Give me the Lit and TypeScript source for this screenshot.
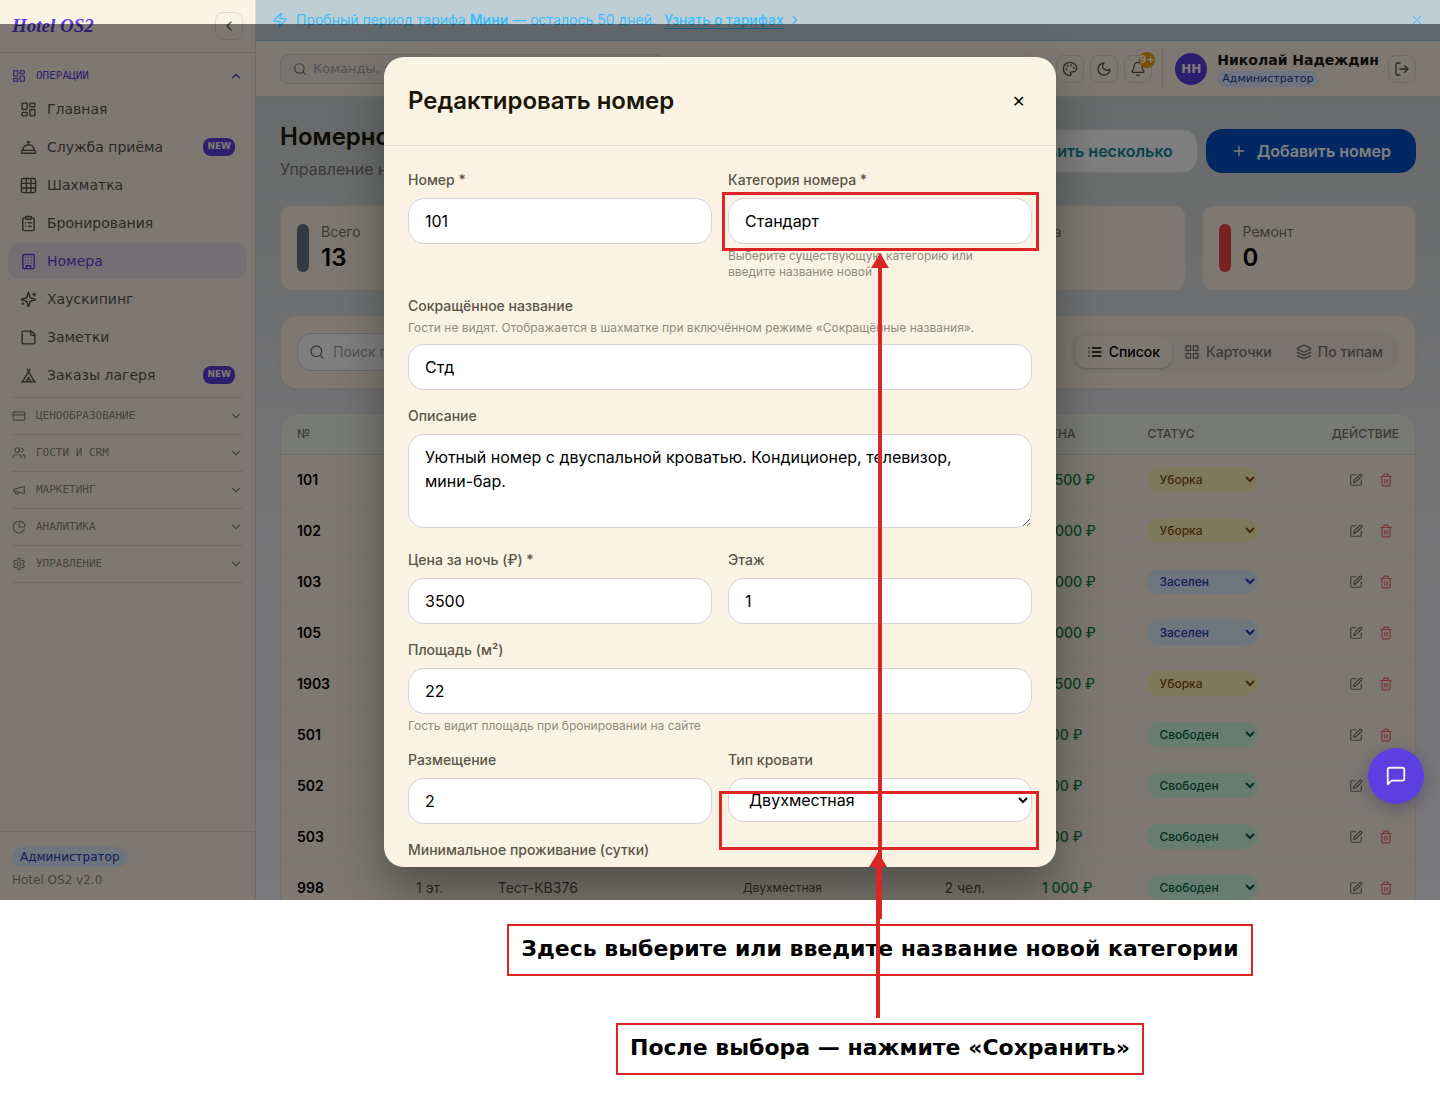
import { LitElement, html, css, svg, nothing } from "lit";
import { customElement, property } from "lit/decorators.js";
import { classMap } from "lit/directives/class-map.js";

const ICONS: Record<string, unknown> = {
  dashboard: svg`<rect x="3" y="3" width="7" height="9" rx="1"/><rect x="14" y="3" width="7" height="5" rx="1"/><rect x="14" y="12" width="7" height="9" rx="1"/><rect x="3" y="16" width="7" height="5" rx="1"/>`,
  bellhop: svg`<path d="M3 20a1 1 0 0 1-1-1v-1a2 2 0 0 1 2-2h16a2 2 0 0 1 2 2v1a1 1 0 0 1-1 1Z"/><path d="M20 16a8 8 0 1 0-16 0"/><path d="M12 4v4"/><path d="M10 4h4"/>`,
  grid: svg`<rect x="2" y="2" width="20" height="20" rx="2.5"/><path d="M2 9h20M2 15.5h20M9 2v20M15.5 2v20"/>`,
  clipboard: svg`<rect x="8" y="2" width="8" height="4" rx="1"/><path d="M16 4h2a2 2 0 0 1 2 2v14a2 2 0 0 1-2 2H6a2 2 0 0 1-2-2V6a2 2 0 0 1 2-2h2"/><path d="M12 11h4M12 16h4M8 11h.01M8 16h.01"/>`,
  building: svg`<rect x="4" y="2" width="16" height="20" rx="2"/><path d="M9 22v-4h6v4M8 6h.01M16 6h.01M12 6h.01M12 10h.01M12 14h.01M16 10h.01M16 14h.01M8 10h.01M8 14h.01"/>`,
  sparkles: svg`<path d="M9.94 15.5A2 2 0 0 0 8.5 14.06l-6.14-1.58a.5.5 0 0 1 0-.96L8.5 9.94A2 2 0 0 0 9.94 8.5l1.58-6.14a.5.5 0 0 1 .96 0L14.06 8.5a2 2 0 0 0 1.44 1.44l6.14 1.58a.5.5 0 0 1 0 .96l-6.14 1.58a2 2 0 0 0-1.44 1.44l-1.58 6.14a.5.5 0 0 1-.96 0z"/><path d="M20 3v4M22 5h-4M4 17v2M5 18H3"/>`,
  note: svg`<path d="M16 3H5a2 2 0 0 0-2 2v14a2 2 0 0 0 2 2h14a2 2 0 0 0 2-2V8Z"/><path d="M15 3v4a2 2 0 0 0 2 2h4"/>`,
  tent: svg`<path d="M3.5 21 14 3M20.5 21 10 3M15.5 21 12 15l-3.5 6M2 21h20"/>`,
  card: svg`<rect x="2" y="5" width="20" height="14" rx="2"/><path d="M2 10h20"/>`,
  users: svg`<path d="M16 21v-2a4 4 0 0 0-4-4H6a4 4 0 0 0-4 4v2"/><circle cx="9" cy="7" r="4"/><path d="M22 21v-2a4 4 0 0 0-3-3.87M16 3.13a4 4 0 0 1 0 7.75"/>`,
  megaphone: svg`<path d="m3 11 18-5v12L3 14v-3z"/><path d="M11.6 16.8a3 3 0 1 1-5.8-1.6"/>`,
  pie: svg`<path d="M21 12c.55 0 1-.45.95-1a10 10 0 0 0-8.95-8.95c-.55-.05-1 .4-1 .95v8a1 1 0 0 0 1 1z"/><path d="M21.21 15.89A10 10 0 1 1 8 2.83"/>`,
  settings: svg`<path d="M12.22 2h-.44a2 2 0 0 0-2 2v.18a2 2 0 0 1-1 1.73l-.43.25a2 2 0 0 1-2 0l-.15-.08a2 2 0 0 0-2.73.73l-.22.38a2 2 0 0 0 .73 2.73l.15.1a2 2 0 0 1 1 1.72v.51a2 2 0 0 1-1 1.74l-.15.09a2 2 0 0 0-.73 2.73l.22.38a2 2 0 0 0 2.73.73l.15-.08a2 2 0 0 1 2 0l.43.25a2 2 0 0 1 1 1.73V20a2 2 0 0 0 2 2h.44a2 2 0 0 0 2-2v-.18a2 2 0 0 1 1-1.73l.43-.25a2 2 0 0 1 2 0l.15.08a2 2 0 0 0 2.73-.73l.22-.39a2 2 0 0 0-.73-2.73l-.15-.08a2 2 0 0 1-1-1.74v-.5a2 2 0 0 1 1-1.74l.15-.09a2 2 0 0 0 .73-2.73l-.22-.38a2 2 0 0 0-2.73-.73l-.15.08a2 2 0 0 1-2 0l-.43-.25a2 2 0 0 1-1-1.73V4a2 2 0 0 0-2-2z"/><circle cx="12" cy="12" r="3"/>`,
  up: svg`<path d="m18 15-6-6-6 6"/>`,
  down: svg`<path d="m6 9 6 6 6-6"/>`,
  left: svg`<path d="m15 18-6-6 6-6"/>`,
  right: svg`<path d="m9 18 6-6-6-6"/>`,
  search: svg`<circle cx="11" cy="11" r="8"/><path d="m21 21-4.3-4.3"/>`,
  palette: svg`<circle cx="13.5" cy="6.5" r=".5" fill="currentColor"/><circle cx="17.5" cy="10.5" r=".5" fill="currentColor"/><circle cx="8.5" cy="7.5" r=".5" fill="currentColor"/><circle cx="6.5" cy="12.5" r=".5" fill="currentColor"/><path d="M12 2C6.5 2 2 6.5 2 12s4.5 10 10 10c.93 0 1.65-.75 1.65-1.69 0-.44-.18-.83-.44-1.12-.29-.29-.44-.65-.44-1.13a1.64 1.64 0 0 1 1.67-1.67h2c3.05 0 5.55-2.5 5.55-5.55C21.97 6.01 17.46 2 12 2z"/>`,
  moon: svg`<path d="M12 3a6 6 0 0 0 9 9 9 9 0 1 1-9-9Z"/>`,
  bell: svg`<path d="M10.27 21a2 2 0 0 0 3.46 0"/><path d="M3.26 15.33A1 1 0 0 0 4 17h16a1 1 0 0 0 .74-1.67C19.41 13.96 18 12.5 18 8A6 6 0 0 0 6 8c0 4.5-1.41 5.96-2.74 7.33"/>`,
  logout: svg`<path d="M9 21H5a2 2 0 0 1-2-2V5a2 2 0 0 1 2-2h4M16 17l5-5-5-5M21 12H9"/>`,
  plus: svg`<path d="M5 12h14M12 5v14"/>`,
  list: svg`<path d="M8 6h13M8 12h13M8 18h13M3 6h.01M3 12h.01M3 18h.01"/>`,
  tiles: svg`<rect x="3" y="3" width="7" height="7" rx="1"/><rect x="14" y="3" width="7" height="7" rx="1"/><rect x="14" y="14" width="7" height="7" rx="1"/><rect x="3" y="14" width="7" height="7" rx="1"/>`,
  layers: svg`<path d="M12.83 2.18a2 2 0 0 0-1.66 0L2.6 6.08a1 1 0 0 0 0 1.83l8.58 3.91a2 2 0 0 0 1.66 0l8.58-3.9a1 1 0 0 0 0-1.83z"/><path d="m22 12.5-9.17 4.16a2 2 0 0 1-1.66 0L2 12.5M22 17.5l-9.17 4.16a2 2 0 0 1-1.66 0L2 17.5"/>`,
  edit: svg`<path d="M12 3H5a2 2 0 0 0-2 2v14a2 2 0 0 0 2 2h14a2 2 0 0 0 2-2v-7"/><path d="M18.38 2.62a1 1 0 0 1 3 3l-9.01 9.01a2 2 0 0 1-.85.51l-2.87.84a.5.5 0 0 1-.62-.62l.84-2.87a2 2 0 0 1 .5-.85z"/>`,
  trash: svg`<path d="M3 6h18M19 6v14a2 2 0 0 1-2 2H7a2 2 0 0 1-2-2V6M8 6V4a2 2 0 0 1 2-2h4a2 2 0 0 1 2 2v2M10 11v6M14 11v6"/>`,
  message: svg`<path d="M21 15a2 2 0 0 1-2 2H7l-4 4V5a2 2 0 0 1 2-2h14a2 2 0 0 1 2 2z"/>`,
  zap: svg`<path d="M4 14a1 1 0 0 1-.78-1.63l9.9-10.2a.5.5 0 0 1 .86.46l-1.92 6.02A1 1 0 0 0 13 10h7a1 1 0 0 1 .78 1.63l-9.9 10.2a.5.5 0 0 1-.86-.46l1.92-6.02A1 1 0 0 0 11 14z"/>`,
  close: svg`<path d="M18 6 6 18M6 6l12 12"/>`,
};

const icon = (name: string, size = 16) =>
  html`<svg class="icon" width=${size} height=${size} viewBox="0 0 24 24" fill="none" stroke="currentColor"
    stroke-width="2" stroke-linecap="round" stroke-linejoin="round" aria-hidden="true">${ICONS[name]}</svg>`;

const base = css`
  * { box-sizing: border-box; }
  :host { text-rendering: optimizeSpeed; }
  .icon { display: block; flex: none; }
  button, input, select, textarea { font: inherit; color: inherit; margin: 0; text-rendering: inherit; }
  button { background: none; border: 0; padding: 0; cursor: pointer; }
  a { color: inherit; text-decoration: none; }
  h1, h2, p, dl, dt, dd, ul { margin: 0; padding: 0; }
  ul { list-style: none; }
`;

const NAV = [
  { icon: "dashboard", label: "Главная" },
  { icon: "bellhop", label: "Служба приёма", fresh: true },
  { icon: "grid", label: "Шахматка" },
  { icon: "clipboard", label: "Бронирования" },
  { icon: "building", label: "Номера", active: true },
  { icon: "sparkles", label: "Хаускипинг" },
  { icon: "note", label: "Заметки" },
  { icon: "tent", label: "Заказы лагеря", fresh: true },
];

const SECTIONS = [
  ["card", "ЦЕНООБРАЗОВАНИЕ"],
  ["users", "ГОСТИ И CRM"],
  ["megaphone", "МАРКЕТИНГ"],
  ["pie", "АНАЛИТИКА"],
  ["settings", "УПРАВЛЕНИЕ"],
];

@customElement("side-nav")
class SideNav extends LitElement {
  static styles = [base, css`
    :host {
      display: flex; flex-direction: column; min-height: 0; background: #fbf3e4; color: #57534e;
      border-right: 1px solid #e3dbcd; font: 14px/20px "DejaVu Sans", sans-serif;
    }
    .brand {
      display: flex; align-items: center; justify-content: space-between; height: 53px; flex: none;
      padding: 0 12px; border-bottom: 1px solid #e3dbcd;
    }
    .logo { font: italic bold 19px/24px "Liberation Serif", serif; color: #5b3fe0; }
    .collapse {
      display: grid; place-items: center; width: 28px; height: 28px; border: 1px solid #e3dbcd; border-radius: 8px;
    }
    nav { flex: 1; min-height: 0; padding-top: 8px; }
    .group {
      display: flex; align-items: center; gap: 10px; width: 100%; height: 30px; padding: 0 12px;
      font: 11px/16px "DejaVu Sans Mono", monospace; color: #8c857a; text-align: left;
    }
    .group.open { color: #5b3fe0; }
    .group span { flex: 1; }
    .items { display: grid; gap: 2px; padding: 0 8px; }
    .item {
      display: flex; align-items: center; gap: 10px; height: 36px; padding: 0 12px; border-radius: 12px;
    }
    .item.active { background: #e7dfe4; color: #5b3fe0; }
    .item .label { flex: 1; }
    .new {
      height: 18px; padding: 0 4px; border-radius: 8px; background: #5b3fe0; color: #fbf3e4;
      font-weight: bold; font-size: 9px; line-height: 16px;
    }
    .sections { padding: 4px 12px 0; }
    .sections li { border-top: 1px solid #e3dbcd; }
    .sections li:last-child { border-bottom: 1px solid #e3dbcd; }
    .sections .group { height: 36px; padding: 0; }
    .foot { padding: 15px 12px 10px; border-top: 1px solid #e3dbcd; font-size: 12px; color: #8c857a; }
    .role {
      display: inline-block; padding: 0 8px; border-radius: 10px; background: #dbeafe; color: #1e40af; margin-bottom: 3px;
    }
  `];

  render() {
    return html`
      <div class="brand">
        <span class="logo">Hotel OS2</span>
        <button class="collapse" aria-label="Свернуть меню">${icon("left")}</button>
      </div>
      <nav aria-label="Главное меню">
        <button class="group open">${icon("dashboard", 14)}<span>ОПЕРАЦИИ</span>${icon("up", 14)}</button>
        <div class="items">
          ${NAV.map((n) => html`
            <a href="#" class=${classMap({ item: true, active: !!n.active })}>
              ${icon(n.icon, 17)}<span class="label">${n.label}</span>
              ${n.fresh ? html`<span class="new">NEW</span>` : nothing}
            </a>`)}
        </div>
        <ul class="sections">
          ${SECTIONS.map(([i, t]) => html`
            <li><button class="group">${icon(i, 14)}<span>${t}</span>${icon("down", 14)}</button></li>`)}
        </ul>
      </nav>
      <div class="foot"><span class="role">Администратор</span><div>Hotel OS2 v2.0</div></div>
    `;
  }
}

@customElement("top-bar")
class TopBar extends LitElement {
  static styles = [base, css`
    :host { display: block; }
    .trial {
      display: flex; align-items: center; height: 41px; padding: 0 16px; background: #bfced5;
      border-bottom: 1px solid #8bbdd8; color: #38bdf8; font: 14px/20px Inter, sans-serif;
    }
    .trial p { margin: 0 8px; }
    .trial strong { font-weight: 600; }
    .more { display: flex; align-items: center; gap: 4px; font-weight: 500; flex: 1; }
    .more span { text-decoration: underline; text-underline-offset: 3px; }
    .dismiss { opacity: 0.7; }
    .bar {
      display: flex; align-items: center; gap: 6px; height: 56px; padding: 0 24px; background: #fbf3e4;
      border-bottom: 1px solid #e3dbcd; color: #57534e; font: 13px/20px "DejaVu Sans", sans-serif;
    }
    .search {
      display: flex; align-items: center; gap: 6px; flex: 0 1 383px; height: 30px; padding: 0 12px;
      border: 1px solid #ddd4c8; border-radius: 8px; background: #f3e9df; color: #78716c;
    }
    .search input { flex: 1; min-width: 0; border: 0; padding: 0; background: none; outline: none; }
    .search input::placeholder { color: #9ca3af; opacity: 1; }
    .spacer { flex: 1; }
    .tool {
      display: grid; place-items: center; width: 28px; height: 28px; flex: none; position: relative;
      border: 1px solid #e3dbcd; border-radius: 8px;
    }
    .count {
      position: absolute; right: -4px; top: -4px; width: 16px; height: 16px; border-radius: 8px;
      background: #f59e0b; color: #fff; font-weight: bold; font-size: 10px; line-height: 15px; text-align: center;
    }
    .user { display: flex; align-items: center; gap: 10px; margin-left: 4px; padding: 2px 3px 2px 12px; border-left: 1px solid #d8d0c3; }
    .avatar {
      display: grid; place-items: center; width: 32px; height: 32px; border-radius: 16px; background: #5b3fe0;
      color: #fbf3e4; font-weight: bold; font-size: 12px;
    }
    .name { font-weight: bold; font-size: 14px; line-height: 18px; color: #1c1917; }
    .role {
      display: block; width: max-content; padding: 0 5px; border-radius: 8px; background: #dbeafe; color: #1e40af;
      font-size: 11px; line-height: 16px; margin-top: 2px;
    }
  `];

  render() {
    return html`
      <div class="trial">
        ${icon("zap")}
        <p>Пробный период тарифа <strong>Мини</strong> — осталось 50 дней.</p>
        <a class="more" href="#"><span>Узнать о тарифах</span>${icon("right", 14)}</a>
        <button class="dismiss" aria-label="Закрыть">${icon("close", 14)}</button>
      </div>
      <header class="bar">
        <label class="search">${icon("search", 14)}
          <input type="search" aria-label="Команды" placeholder="Команды, поиск" /></label>
        <span class="spacer"></span>
        <button class="tool" aria-label="Тема">${icon("palette")}</button>
        <button class="tool" aria-label="Тёмный режим">${icon("moon")}</button>
        <button class="tool" aria-label="Уведомления">${icon("bell")}<span class="count">9+</span></button>
        <div class="user">
          <span class="avatar">НН</span>
          <div><div class="name">Николай Надеждин</div><span class="role">Администратор</span></div>
        </div>
        <button class="tool" aria-label="Выйти">${icon("logout")}</button>
      </header>
    `;
  }
}

const STATS = [
  ["Всего", 13, "total"], ["Свободно", 8, "free"], ["Заселено", 2, "busy"], ["Уборка", 3, "clean"], ["Ремонт", 0, "repair"],
] as const;

const ROOMS = [
  ["101", "1 эт.", "Стандарт", "Двухместная", "2 чел.", "3 500 ₽", "Уборка"],
  ["102", "1 эт.", "Стандарт", "Двухместная", "2 чел.", "4 000 ₽", "Уборка"],
  ["103", "1 эт.", "Стандарт", "Двухместная", "2 чел.", "4 000 ₽", "Заселен"],
  ["105", "1 эт.", "Стандарт", "Двухместная", "2 чел.", "4 000 ₽", "Заселен"],
  ["1903", "1 эт.", "Стандарт", "Двухместная", "2 чел.", "3 500 ₽", "Уборка"],
  ["501", "5 эт.", "Хостел", "Двухместная", "2 чел.", "800 ₽", "Свободен"],
  ["502", "5 эт.", "Хостел", "Двухместная", "2 чел.", "800 ₽", "Свободен"],
  ["503", "5 эт.", "Хостел", "Двухместная", "2 чел.", "800 ₽", "Свободен"],
  ["998", "1 эт.", "Тест-КВ376", "Двухместная", "2 чел.", "1 000 ₽", "Свободен"],
];

const STATUSES = ["Свободен", "Заселен", "Уборка"];

@customElement("rooms-page")
class RoomsPage extends LitElement {
  static styles = [base, css`
    :host { display: flex; flex-direction: column; gap: 24px; padding: 24px; font: 14px/20px Inter, sans-serif; color: #78716c; }
    .head { display: flex; align-items: center; gap: 8px; }
    .titles { flex: 1; }
    h1 { font-size: 24px; line-height: 32px; font-weight: 600; color: #1c1608; }
    .titles p { margin-top: 4px; font-size: 16px; line-height: 24px; }
    .btn {
      display: flex; align-items: center; gap: 10px; height: 44px; padding: 0 24px; border-radius: 16px;
      font-size: 16px; font-weight: 600; border: 1px solid #e3e3e3; background: #fff; color: #0a8a9e;
    }
    .btn.primary { background: #0550c8; border-color: #0550c8; color: #fff; }
    .stats { display: grid; grid-template-columns: repeat(5, 1fr); gap: 16px; }
    .card { background: #fbf3e4; border: 1px solid #e8e0d2; border-radius: 12px; }
    .stat { display: flex; align-items: center; gap: 12px; padding: 16px; }
    .mark { width: 12px; height: 48px; border-radius: 6px; background: #64748b; }
    .mark.free { background: #10b981; }
    .mark.busy { background: #3b82f6; }
    .mark.clean { background: #f59e0b; }
    .mark.repair { background: #ef4444; }
    .stat dd { font-size: 24px; line-height: 32px; font-weight: 600; color: #000; }
    .filters {
      display: flex; align-items: center; justify-content: space-between; padding: 16px; border-radius: 16px;
      box-shadow: 0 1px 2px rgba(0, 0, 0, 0.08);
    }
    .find {
      display: flex; align-items: center; gap: 8px; width: 320px; height: 38px; padding: 0 11px; background: #fff;
      border: 1px solid #d1d5db; border-radius: 16px;
    }
    .find input { flex: 1; min-width: 0; border: 0; padding: 0; background: none; outline: none; }
    .find input::placeholder { color: #9ca3af; opacity: 1; }
    .tabs { display: flex; padding: 4px; border-radius: 16px; background: #f3e9df; }
    .tab {
      display: flex; align-items: center; gap: 6px; height: 32px; padding: 0 12px; border-radius: 12px; font-weight: 500;
    }
    .tab.on { background: #fbf3e4; color: #000; box-shadow: 0 1px 2px rgba(0, 0, 0, 0.2); }
    .sheet { border-radius: 20px; overflow: hidden; }
    table { width: 100%; border-collapse: collapse; table-layout: fixed; }
    .no { width: 10.5%; }
    .floor { width: 7.2%; }
    .cat { width: 21.6%; }
    .bed { width: 17.8%; }
    .cap { width: 8.6%; }
    .cost { width: 9.3%; }
    th {
      height: 40px; padding: 0 16px; text-align: left; font-size: 12px; line-height: 16px; font-weight: 500;
      background: #f1f4ec; border-bottom: 1px solid #dcdcd8; white-space: nowrap;
    }
    td { height: 51px; padding: 0 16px; border-bottom: 1px solid #e9eeee; color: #57534e; white-space: nowrap; }
    .num { font-weight: 600; color: #000; font-size: 14px; }
    .small { font-size: 12px; }
    .price { color: #15803d; font-weight: 500; }
    .right { text-align: right; }
    .status {
      display: block; width: 111px; height: 25px; border: 0; border-radius: 13px; padding: 0 0 0 8px; font-size: 12px;
      font-weight: 500; background: #d1fae5; color: #065f46;
    }
    .status.clean { background: #fef3b8; color: #854d0e; }
    .status.busy { background: #dbeafe; color: #1e40af; }
    .acts { display: flex; justify-content: flex-end; gap: 4px; }
    .act { display: grid; place-items: center; width: 26px; height: 26px; color: #78716c; }
    .act.del { color: #ef4444; opacity: 0.8; }
  `];

  render() {
    return html`
      <div class="head">
        <div class="titles"><h1>Номерной фонд</h1><p>Управление номерами</p></div>
        <button class="btn">${icon("plus")}Добавить несколько</button>
        <button class="btn primary">${icon("plus")}Добавить номер</button>
      </div>
      <div class="stats">
        ${STATS.map(([label, value, kind]) => html`
          <div class="card stat"><span class="mark ${kind}"></span><dl><dt>${label}</dt><dd>${value}</dd></dl></div>`)}
      </div>
      <div class="card filters">
        <label class="find">${icon("search")}
          <input type="search" aria-label="Поиск" placeholder="Поиск по номеру" /></label>
        <div class="tabs">
          <button class="tab on">${icon("list")}Список</button>
          <button class="tab">${icon("tiles")}Карточки</button>
          <button class="tab">${icon("layers")}По типам</button>
        </div>
      </div>
      <div class="card sheet">
        <table>
          <thead><tr>
            <th class="no">№</th><th class="floor">ЭТАЖ</th><th class="cat">КАТЕГОРИЯ</th><th class="bed">ТИП КРОВАТИ</th>
            <th class="cap">МЕСТ</th><th class="cost">ЦЕНА</th><th>СТАТУС</th><th class="right">ДЕЙСТВИЕ</th>
          </tr></thead>
          <tbody>
            ${ROOMS.map(([no, floor, cat, bed, cap, price, status]) => html`
              <tr>
                <td class="num">${no}</td><td>${floor}</td><td>${cat}</td><td class="small">${bed}</td><td>${cap}</td>
                <td class="price">${price}</td>
                <td><select aria-label="Статус номера ${no}"
                  class=${classMap({ status: true, clean: status === "Уборка", busy: status === "Заселен" })}>
                  ${STATUSES.map((s) => html`<option ?selected=${s === status}>${s}</option>`)}
                </select></td>
                <td><div class="acts">
                  <button class="act" aria-label="Изменить">${icon("edit", 14)}</button>
                  <button class="act del" aria-label="Удалить">${icon("trash", 14)}</button>
                </div></td>
              </tr>`)}
          </tbody>
        </table>
      </div>
    `;
  }
}

@customElement("room-dialog")
class RoomDialog extends LitElement {
  static styles = [base, css`
    :host {
      display: flex; flex-direction: column; width: 672px; max-width: 100%; height: 100%; overflow: hidden;
      border-radius: 20px; background: #faf3e4; box-shadow: 0 25px 50px rgba(0, 0, 0, 0.35);
      font: 14px/20px Inter, sans-serif; color: #5c5548;
    }
    .top {
      display: flex; align-items: center; justify-content: space-between; flex: none; height: 89px; padding: 0 24px;
      border-bottom: 1px solid #e3dccf; color: #1c1608;
    }
    h2 { font-size: 24px; line-height: 32px; font-weight: 600; }
    .close { width: 28px; height: 28px; font-size: 16px; color: #000; }
    form { display: grid; grid-template-columns: 1fr 1fr; gap: 16px; padding: 24px; align-items: start; }
    .field { display: flex; flex-direction: column; }
    .wide { grid-column: 1 / -1; }
    label { font-weight: 500; margin-bottom: 8px; }
    .hint { font-size: 12px; line-height: 16px; color: #918a7c; margin-top: 4px; }
    .below { padding-right: 24px; }
    .above { margin: -4px 0 8px; }
    input, textarea, select {
      width: 100%; height: 46px; padding: 0 16px; border: 1px solid #d1d5db; border-radius: 16px; background: #fff;
      color: #000; font-size: 16px; line-height: 24px;
    }
    textarea { display: block; height: 94px; padding: 10px 40px 10px 16px; resize: vertical; margin-bottom: 6px; }
    select { height: 44px; padding-right: 0; }
  `];

  render() {
    return html`
      <div class="top"><h2 id="title">Редактировать номер</h2><button class="close" aria-label="Закрыть">✕</button></div>
      <form>
        <div class="field"><label for="no">Номер *</label><input id="no" .value=${"101"} /></div>
        <div class="field">
          <label for="cat">Категория номера *</label><input id="cat" .value=${"Стандарт"} />
          <p class="hint below">Выберите существующую категорию или введите название новой</p>
        </div>
        <div class="field wide">
          <label for="short">Сокращённое название</label>
          <p class="hint above">Гости не видят. Отображается в шахматке при включённом режиме «Сокращённые названия».</p>
          <input id="short" .value=${"Стд"} />
        </div>
        <div class="field wide">
          <label for="about">Описание</label>
          <textarea id="about" .value=${"Уютный номер с двуспальной кроватью. Кондиционер, телевизор, мини-бар."}></textarea>
        </div>
        <div class="field"><label for="price">Цена за ночь (₽) *</label><input id="price" .value=${"3500"} /></div>
        <div class="field"><label for="floor">Этаж</label><input id="floor" .value=${"1"} /></div>
        <div class="field wide">
          <label for="area">Площадь (м²)</label><input id="area" .value=${"22"} />
          <p class="hint">Гость видит площадь при бронировании на сайте</p>
        </div>
        <div class="field"><label for="cap">Размещение</label><input id="cap" .value=${"2"} /></div>
        <div class="field"><label for="bed">Тип кровати</label>
          <select id="bed"><option>Двухместная</option><option>Одноместная</option></select></div>
        <div class="field wide"><label for="min">Минимальное проживание (сутки)</label><input id="min" .value=${"1"} /></div>
      </form>
    `;
  }
}

@customElement("app-root")
class AppRoot extends LitElement {
  @property({ type: Boolean }) open = true;

  static styles = [base, css`
    :host { display: flex; flex-direction: column; height: 100vh; position: relative; overflow: hidden; background: #fff; }
    .frame { display: grid; grid-template-columns: 256px 1fr; grid-template-rows: 100%; flex: 1; min-height: 0; position: relative; overflow: hidden; }
    .main { display: flex; flex-direction: column; min-height: 0; overflow: hidden; background: linear-gradient(#cbd2d2, #e6e6e9 50%, #f4f4fa); }
    .shade {
      position: absolute; inset: 24px 0 0; display: flex; justify-content: center; padding: 33px 0;
      background: rgba(0, 0, 0, 0.5);
    }
    .chat {
      position: absolute; right: 16px; bottom: 96px; display: grid; place-items: center; width: 56px; height: 56px;
      border-radius: 28px; background: #5b3fe0; color: #fbf3e4; box-shadow: 0 4px 16px rgba(40, 30, 80, 0.4);
    }
    .notes { display: flex; flex-direction: column; align-items: center; gap: 47px; padding: 24px 0 23px 320px; }
    .note {
      padding: 11px 12px 13px; border: 2px solid #dc2626; background: #fff; color: #000; white-space: nowrap;
      font: bold 22px/24px "DejaVu Sans", sans-serif;
    }
    .mark { position: absolute; border: 3px solid #dc2626; pointer-events: none; height: 59px; }
    .mark.category { left: calc(50% + 2px); top: 192px; width: 317px; }
    .mark.save { left: calc(50% - 1px); top: 791px; width: 320px; }
    .arrow { position: absolute; width: 18px; pointer-events: none; }
    .arrow::before {
      content: ""; display: block; width: 18px; height: 15px; background: #dc2626; clip-path: polygon(50% 0, 100% 100%, 0 100%);
    }
    .arrow::after { content: ""; position: absolute; left: 7px; top: 8px; bottom: 0; width: 4px; background: #dc2626; }
    .arrow.first { left: calc(50% + 151px); top: 253px; height: 666px; }
    .arrow.second { left: calc(50% + 149px); top: 852px; height: 166px; }
  `];

  render() {
    return html`
      <div class="frame">
        <side-nav></side-nav>
        <div class="main"><top-bar></top-bar><rooms-page></rooms-page></div>
        ${this.open ? html`<div class="shade"><room-dialog role="dialog" aria-modal="true"></room-dialog></div>` : nothing}
        <button class="chat" aria-label="Чат">${icon("message", 22)}</button>
      </div>
      <div class="notes">
        <div class="note">Здесь выберите или введите название новой категории</div>
        <div class="note">После выбора — нажмите «Сохранить»</div>
      </div>
      <div class="mark category"></div>
      <div class="mark save"></div>
      <div class="arrow first"></div>
      <div class="arrow second"></div>
    `;
  }
}
